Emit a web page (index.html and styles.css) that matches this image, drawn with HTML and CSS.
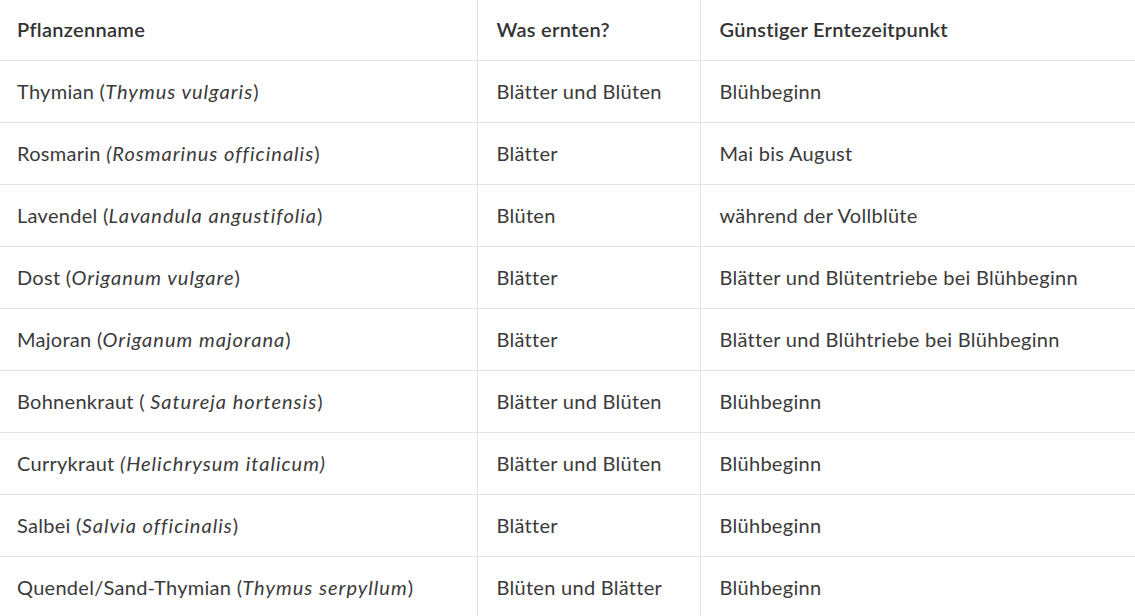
FILE: index.html
```html
<!DOCTYPE html>
<html lang="de">
<head>
<meta charset="utf-8">
<title>Kräuter ernten</title>
<link rel="stylesheet" href="styles.css">
</head>
<body>
<table class="herbs">
  <colgroup>
    <col class="c1">
    <col class="c2">
    <col class="c3">
  </colgroup>
  <thead>
    <tr><th>Pflanzenname</th><th>Was ernten?</th><th>Günstiger Erntezeitpunkt</th></tr>
  </thead>
  <tbody>
    <tr><td>Thymian (<em>Thymus vulgaris</em>)</td><td>Blätter und Blüten</td><td>Blühbeginn</td></tr>
    <tr><td>Rosmarin <em>(Rosmarinus officinalis</em>)</td><td>Blätter</td><td>Mai bis August</td></tr>
    <tr><td>Lavendel (<em>Lavandula angustifolia</em>)</td><td>Blüten</td><td>während der Vollblüte</td></tr>
    <tr><td>Dost (<em>Origanum vulgare</em>)</td><td>Blätter</td><td>Blätter und Blütentriebe bei Blühbeginn</td></tr>
    <tr><td>Majoran (<em>Origanum majorana</em>)</td><td>Blätter</td><td>Blätter und Blühtriebe bei Blühbeginn</td></tr>
    <tr><td>Bohnenkraut ( <em>Satureja hortensis</em>)</td><td>Blätter und Blüten</td><td>Blühbeginn</td></tr>
    <tr><td>Currykraut <em>(Helichrysum italicum)</em></td><td>Blätter und Blüten</td><td>Blühbeginn</td></tr>
    <tr><td>Salbei (<em>Salvia officinalis</em>)</td><td>Blätter</td><td>Blühbeginn</td></tr>
    <tr><td>Quendel/Sand-Thymian (<em>Thymus serpyllum</em>)</td><td>Blüten und Blätter</td><td>Blühbeginn</td></tr>
  </tbody>
</table>
</body>
</html>
```
FILE: styles.css
```css
html, body {
  margin: 0;
  padding: 0;
  background: #ffffff;
}
body {
  font-family: Lato, "Noto Sans", sans-serif;
  font-size: 20px;
  letter-spacing: 0.28px;
  color: #3a3a3a;
}
.herbs {
  border-collapse: collapse;
  table-layout: fixed;
  width: 1160px;
}
.c1 { width: 477px; }
.c2 { width: 223px; }
.c3 { width: 460px; }
.herbs th,
.herbs td {
  text-align: left;
  vertical-align: middle;
  padding: 0 0 2px 19px;
  border-bottom: 1px solid #e3e3e3;
  border-left: 1px solid #e3e3e3;
  white-space: nowrap;
}
.herbs th:first-child,
.herbs td:first-child {
  border-left: none;
  padding-left: 17px;
}
.herbs th {
  height: 58px;
  padding-bottom: 2px;
  font-weight: 600;
  color: #333333;
}
.herbs td {
  height: 59px;
}
.herbs em {
  font-style: italic;
  letter-spacing: 1px;
}
```
